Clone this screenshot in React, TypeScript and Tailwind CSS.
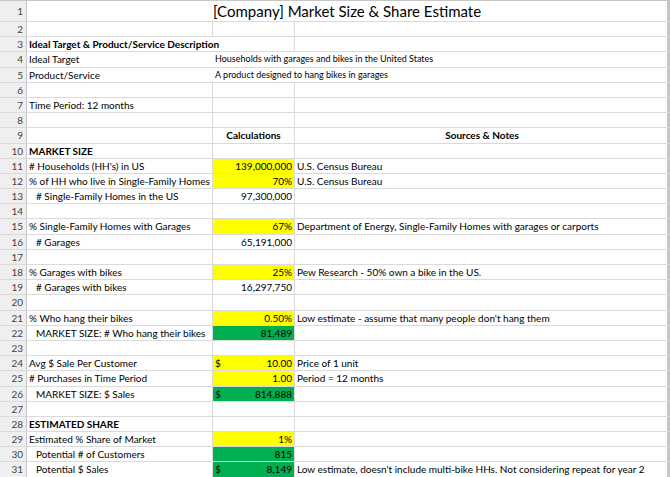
import React from "react";

type R = {
  n: number; a?: string; ab?: boolean; ai?: boolean; b?: string; bd?: boolean; bg?: string; bc?: boolean; bb?: boolean; c?: string; cc?: boolean; cb?: boolean; over?: string; noA?: boolean; noB?: boolean;
};

const rows: R[] = [
  { n: 2 },
  { n: 3, a: "Ideal Target & Product/Service Description", ab: true, noA: true },
  { n: 4, a: "Ideal Target", over: "Households with garages and bikes in the United States" },
  { n: 5, a: "Product/Service", over: "A product designed to hang bikes in garages" },
  { n: 6 },
  { n: 7, a: "Time Period: 12 months" },
  { n: 8 },
  { n: 9, b: "Calculations", bc: true, bb: true, c: "Sources & Notes", cc: true, cb: true },
  { n: 10, a: "MARKET SIZE", ab: true },
  { n: 11, a: "# Households (HH's) in US", b: "139,000,000", bg: "y", c: "U.S. Census Bureau" },
  { n: 12, a: "% of HH who live in Single-Family Homes", b: "70%", bg: "y", c: "U.S. Census Bureau" },
  { n: 13, a: "# Single-Family Homes in the US", ai: true, b: "97,300,000" },
  { n: 14 },
  { n: 15, a: "% Single-Family Homes with Garages", b: "67%", bg: "y", c: "Department of Energy, Single-Family Homes with garages or carports" },
  { n: 16, a: "# Garages", ai: true, b: "65,191,000" },
  { n: 17 },
  { n: 18, a: "% Garages with bikes", b: "25%", bg: "y", c: "Pew Research - 50% own a bike in the US." },
  { n: 19, a: "# Garages with bikes", ai: true, b: "16,297,750" },
  { n: 20 },
  { n: 21, a: "% Who hang their bikes", b: "0.50%", bg: "y", c: "Low estimate - assume that many people don't hang them" },
  { n: 22, a: "MARKET SIZE: # Who hang their bikes", ai: true, b: "81,489", bg: "g" },
  { n: 23 },
  { n: 24, a: "Avg $ Sale Per Customer", b: "10.00", bd: true, bg: "y", c: "Price of 1 unit" },
  { n: 25, a: "# Purchases in Time Period", b: "1.00", bg: "y", c: "Period = 12 months" },
  { n: 26, a: "MARKET SIZE: $ Sales", ai: true, b: "814,888", bd: true, bg: "g" },
  { n: 27 },
  { n: 28, a: "ESTIMATED SHARE", ab: true },
  { n: 29, a: "Estimated % Share of Market", b: "1%", bg: "y" },
  { n: 30, a: "Potential # of Customers", ai: true, b: "815", bg: "g" },
  { n: 31, a: "Potential $ Sales", ai: true, b: "8,149", bd: true, bg: "g", c: "Low estimate, doesn't include multi-bike HHs. Not considering repeat for year 2" },
];

export default function App() {
  return (
    <div className="w-[670px] h-[477px] overflow-hidden bg-white text-[10px] text-black border-t border-[#c6c6c6]" style={{ fontFamily: "Lato, 'Open Sans', sans-serif" }}>
      <div className="flex h-[21px] border-b border-[#dadada]">
        <div className="w-[27px] shrink-0 bg-[#efefef] border-r border-[#c6c6c6] text-right pr-[3px] text-[#444] leading-[21px]">1</div>
        <div className="w-[640px] text-center text-[15px] leading-[21px]">[Company] Market Size &amp; Share Estimate</div>
        <div className="w-[3px] bg-[#c6c6c6]" />
      </div>
      {rows.map((r) => {
        const bgc = r.bg === "y" ? "bg-[#ffff00]" : r.bg === "g" ? "bg-[#00b050]" : "";
        return (
          <div key={r.n} className="flex h-[15.2px] leading-[14px] border-b border-[#dadada]">
            <div className="w-[27px] shrink-0 bg-[#efefef] border-r border-[#c6c6c6] text-right pr-[3px] text-[#444]">{r.n}</div>
            <div className={`w-[186px] shrink-0 relative whitespace-nowrap pl-[2px] ${r.noA || r.over ? "" : "border-r border-[#dadada]"}`}>
              <span className={`${r.ab ? "font-bold" : ""} ${r.ai ? "pl-[7px]" : ""}`}>{r.a}</span>
              {r.over && <span className="absolute left-[188px] top-0 text-[9px]">{r.over}</span>}
            </div>
            <div className={`w-[82px] shrink-0 flex whitespace-nowrap px-[2px] ${bgc} ${r.over ? "" : "border-r border-[#dadada]"} ${r.bc ? "justify-center" : "justify-between"}`}>
              {r.bd ? <span>$</span> : <span />}
              <span className={r.bb ? "font-bold" : ""}>{r.b}</span>
            </div>
            <div className={`w-[372px] shrink-0 whitespace-nowrap pl-[2px] ${r.cc ? "text-center" : ""} ${r.cb ? "font-bold" : ""}`}>{r.c}</div>
            <div className="w-[3px] bg-[#c6c6c6]" />
          </div>
        );
      })}
    </div>
  );
}
